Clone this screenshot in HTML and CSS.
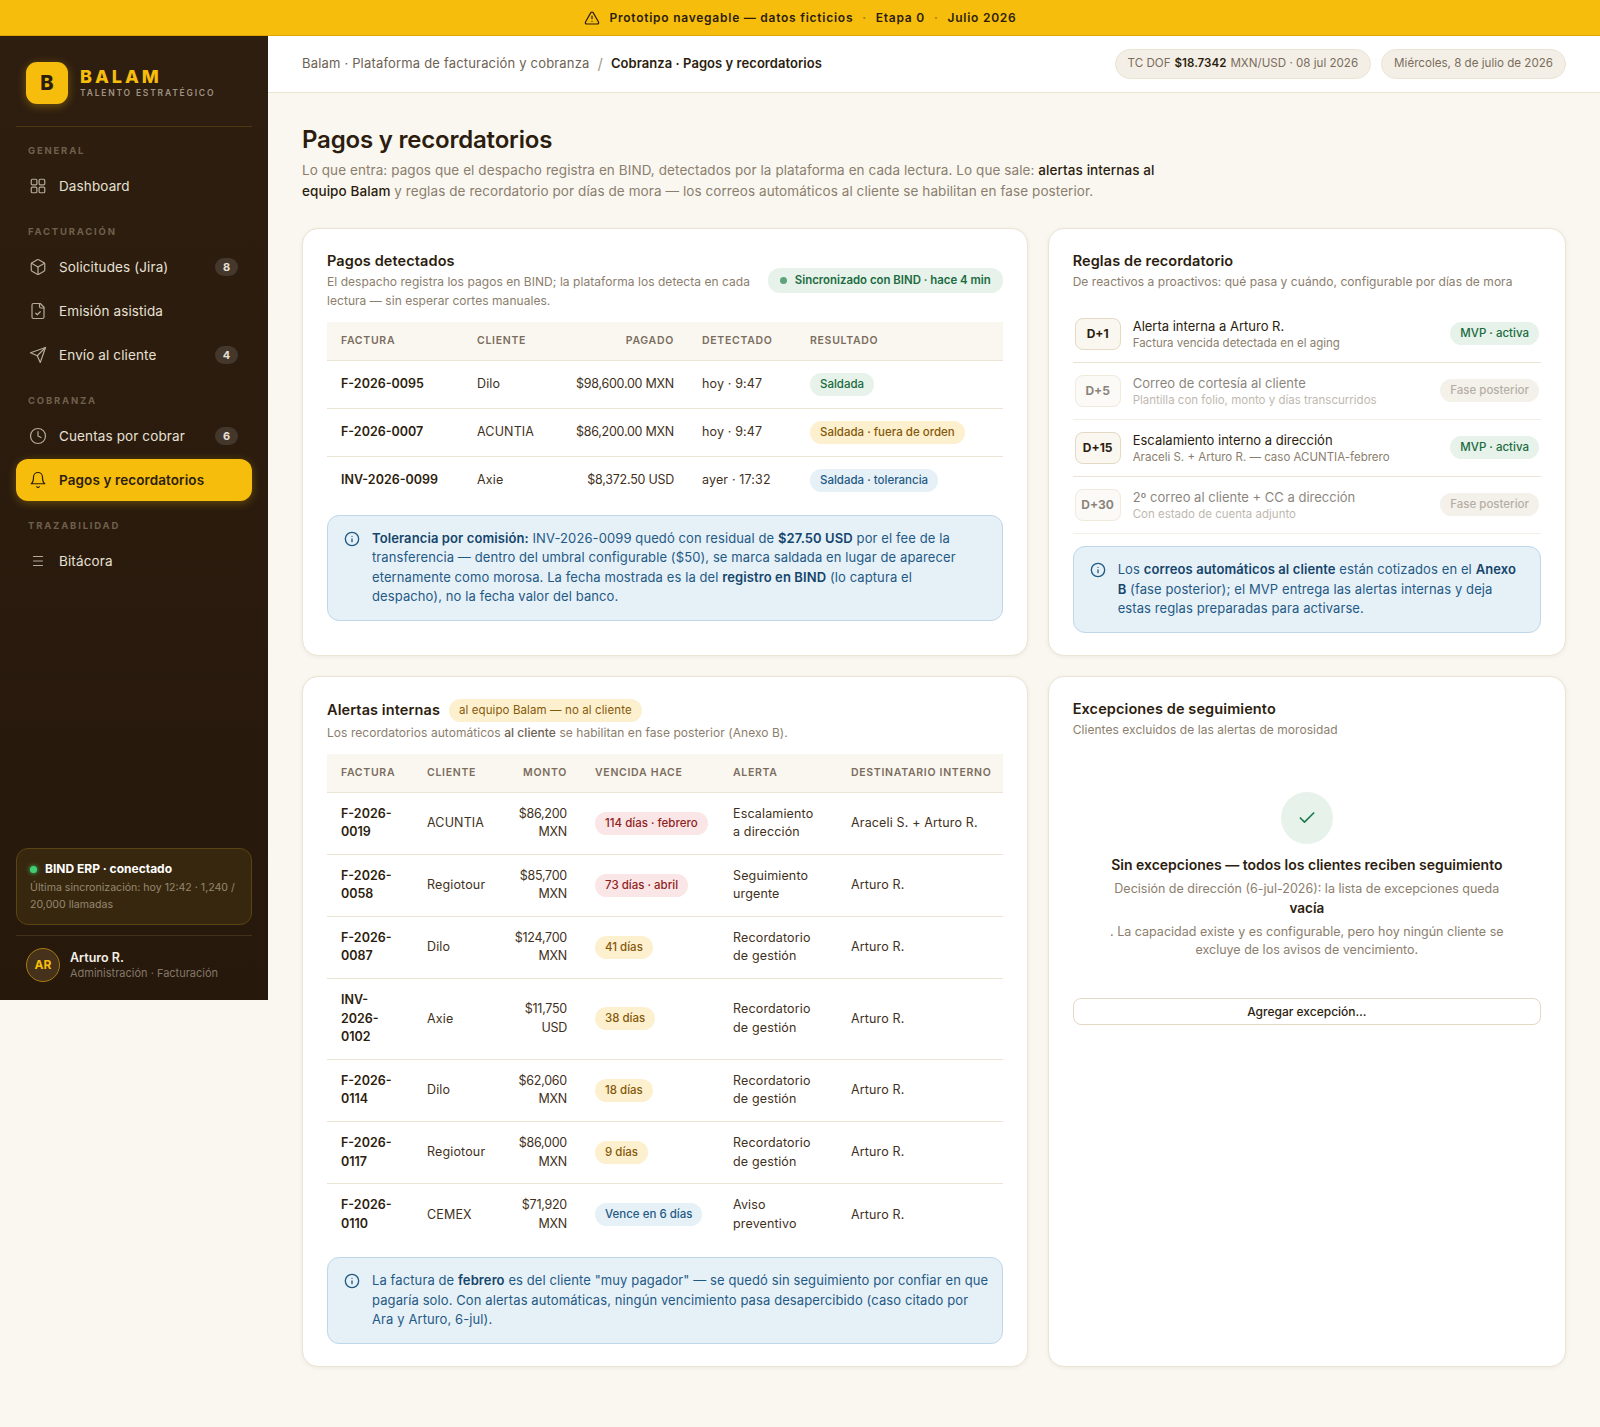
FILE: index.html
```html
<!DOCTYPE html>
<html lang="es">
<head>
    <meta charset="UTF-8">
    <meta name="viewport" content="width=device-width, initial-scale=1.0">
    <title>Pagos y recordatorios · Balam</title>
    <link rel="stylesheet" href="styles.css">
</head>
<body>
    <div class="proto-bar">
        <svg class="proto-icon" viewBox="0 0 24 24"><path d="m21.73 18-8-14a2 2 0 0 0-3.48 0l-8 14A2 2 0 0 0 4 21h16a2 2 0 0 0 1.73-3"/><path d="M12 9v4"/><path d="M12 17h.01"/></svg>
        <span>Prototipo navegable — datos ficticios</span>
        <span class="proto-sep">·</span>
        <span>Etapa 0</span>
        <span class="proto-sep">·</span>
        <span>Julio 2026</span>
    </div>

    <div class="shell">
        <aside class="sidebar">
            <div class="brand">
                <div class="brand-mark">B</div>
                <div>
                    <div class="brand-name">BALAM</div>
                    <div class="brand-sub">TALENTO ESTRATÉGICO</div>
                </div>
            </div>

            <nav class="nav">
                <div class="nav-label">General</div>
                <a class="nav-item">
                    <svg class="nav-icon" viewBox="0 0 24 24"><rect x="3" y="3" width="7.5" height="7.5" rx="1.5"/><rect x="13.5" y="3" width="7.5" height="7.5" rx="1.5"/><rect x="13.5" y="13.5" width="7.5" height="7.5" rx="1.5"/><rect x="3" y="13.5" width="7.5" height="7.5" rx="1.5"/></svg>
                    Dashboard
                </a>

                <div class="nav-label">Facturación</div>
                <a class="nav-item">
                    <svg class="nav-icon" viewBox="0 0 24 24"><path d="M21 8a2 2 0 0 0-1-1.73l-7-4a2 2 0 0 0-2 0l-7 4A2 2 0 0 0 3 8v8a2 2 0 0 0 1 1.73l7 4a2 2 0 0 0 2 0l7-4A2 2 0 0 0 21 16Z"/><path d="m3.3 7 8.7 5 8.7-5"/><path d="M12 22V12"/></svg>
                    Solicitudes (Jira)
                    <span class="nav-count">8</span>
                </a>
                <a class="nav-item">
                    <svg class="nav-icon" viewBox="0 0 24 24"><path d="M15 2H6a2 2 0 0 0-2 2v16a2 2 0 0 0 2 2h12a2 2 0 0 0 2-2V7Z"/><path d="M14 2v4a2 2 0 0 0 2 2h4"/><path d="m9 15 2 2 4-4"/></svg>
                    Emisión asistida
                </a>
                <a class="nav-item">
                    <svg class="nav-icon" viewBox="0 0 24 24"><path d="M22 2 15 22 11 13 2 9Z"/><path d="M22 2 11 13"/></svg>
                    Envío al cliente
                    <span class="nav-count">4</span>
                </a>

                <div class="nav-label">Cobranza</div>
                <a class="nav-item">
                    <svg class="nav-icon" viewBox="0 0 24 24"><circle cx="12" cy="12" r="10"/><polyline points="12 6 12 12 16 14"/></svg>
                    Cuentas por cobrar
                    <span class="nav-count">6</span>
                </a>
                <a class="nav-item active">
                    <svg class="nav-icon" viewBox="0 0 24 24"><path d="M6 8a6 6 0 0 1 12 0c0 7 3 9 3 9H3s3-2 3-9"/><path d="M10.3 21a1.94 1.94 0 0 0 3.4 0"/></svg>
                    Pagos y recordatorios
                </a>

                <div class="nav-label">Trazabilidad</div>
                <a class="nav-item">
                    <svg class="nav-icon" viewBox="0 0 24 24"><path d="M6 6h12"/><path d="M6 12h12"/><path d="M6 18h12"/></svg>
                    Bitácora
                </a>
            </nav>

            <div class="sync-box">
                <div class="sync-title"><span class="sync-dot"></span>BIND ERP · conectado</div>
                <div class="sync-text">Última sincronización: hoy 12:42 · 1,240 / 20,000 llamadas</div>
            </div>

            <div class="user">
                <div class="avatar">AR</div>
                <div>
                    <div class="user-name">Arturo R.</div>
                    <div class="user-role">Administración · Facturación</div>
                </div>
            </div>
        </aside>

        <div class="content">
            <header class="topbar">
                <div class="crumbs">
                    <span class="crumb-root">Balam · Plataforma de facturación y cobranza</span>
                    <span class="crumb-sep">/</span>
                    <strong>Cobranza · Pagos y recordatorios</strong>
                </div>
                <div class="top-pills">
                    <div class="top-pill">TC DOF <strong>$18.7342</strong> MXN/USD · 08 jul 2026</div>
                    <div class="top-pill">Miércoles, 8 de julio de 2026</div>
                </div>
            </header>

            <main class="page">
                <h1>Pagos y recordatorios</h1>
                <p class="lead">Lo que entra: pagos que el despacho registra en BIND, detectados por la plataforma en cada lectura. Lo que sale: <strong>alertas internas al equipo Balam</strong> y reglas de recordatorio por días de mora — los correos automáticos al cliente se habilitan en fase posterior.</p>

                <div class="grid">
                    <section class="card">
                        <div class="card-head">
                            <div class="card-head-text">
                                <h2>Pagos detectados</h2>
                                <p class="card-sub">El despacho registra los pagos en BIND; la plataforma los detecta en cada lectura — sin esperar cortes manuales.</p>
                            </div>
                            <span class="pill green sync-pill"><span class="pill-dot"></span>Sincronizado con BIND · hace 4 min</span>
                        </div>

                        <table class="data pagos">
                            <thead>
                                <tr>
                                    <th>Factura</th>
                                    <th>Cliente</th>
                                    <th class="num">Pagado</th>
                                    <th>Detectado</th>
                                    <th>Resultado</th>
                                </tr>
                            </thead>
                            <tbody>
                                <tr>
                                    <td class="folio">F-2026-0095</td>
                                    <td>Dilo</td>
                                    <td class="num">$98,600.00 MXN</td>
                                    <td>hoy · 9:47</td>
                                    <td><span class="pill green">Saldada</span></td>
                                </tr>
                                <tr>
                                    <td class="folio">F-2026-0007</td>
                                    <td>ACUNTIA</td>
                                    <td class="num">$86,200.00 MXN</td>
                                    <td>hoy · 9:47</td>
                                    <td><span class="pill amber">Saldada · fuera de orden</span></td>
                                </tr>
                                <tr>
                                    <td class="folio">INV-2026-0099</td>
                                    <td>Axie</td>
                                    <td class="num">$8,372.50 USD</td>
                                    <td>ayer · 17:32</td>
                                    <td><span class="pill blue">Saldada · tolerancia</span></td>
                                </tr>
                            </tbody>
                        </table>

                        <div class="callout">
                            <svg class="callout-icon" viewBox="0 0 24 24"><circle cx="12" cy="12" r="10"/><path d="M12 16v-4"/><path d="M12 8h.01"/></svg>
                            <div><strong>Tolerancia por comisión:</strong> INV-2026-0099 quedó con residual de <strong>$27.50 USD</strong> por el fee de la transferencia — dentro del umbral configurable ($50), se marca saldada en lugar de aparecer eternamente como morosa. La fecha mostrada es la del <strong>registro en BIND</strong> (lo captura el<br>despacho), no la fecha valor del banco.</div>
                        </div>
                    </section>

                    <section class="card">
                        <div class="card-head">
                            <div class="card-head-text">
                                <h2>Reglas de recordatorio</h2>
                                <p class="card-sub">De reactivos a proactivos: qué pasa y cuándo, configurable por días de mora</p>
                            </div>
                        </div>

                        <div class="rules">
                            <div class="rule">
                                <div class="rule-day">D+1</div>
                                <div class="rule-body">
                                    <div class="rule-title">Alerta interna a Arturo R.</div>
                                    <div class="rule-sub">Factura vencida detectada en el aging</div>
                                </div>
                                <span class="pill green">MVP · activa</span>
                            </div>
                            <div class="rule later">
                                <div class="rule-day">D+5</div>
                                <div class="rule-body">
                                    <div class="rule-title">Correo de cortesía al cliente</div>
                                    <div class="rule-sub">Plantilla con folio, monto y días transcurridos</div>
                                </div>
                                <span class="pill grey">Fase posterior</span>
                            </div>
                            <div class="rule">
                                <div class="rule-day">D+15</div>
                                <div class="rule-body">
                                    <div class="rule-title">Escalamiento interno a dirección</div>
                                    <div class="rule-sub">Araceli S. + Arturo R. — caso ACUNTIA-febrero</div>
                                </div>
                                <span class="pill green">MVP · activa</span>
                            </div>
                            <div class="rule later">
                                <div class="rule-day">D+30</div>
                                <div class="rule-body">
                                    <div class="rule-title">2º correo al cliente + CC a dirección</div>
                                    <div class="rule-sub">Con estado de cuenta adjunto</div>
                                </div>
                                <span class="pill grey">Fase posterior</span>
                            </div>
                        </div>

                        <div class="callout">
                            <svg class="callout-icon" viewBox="0 0 24 24"><circle cx="12" cy="12" r="10"/><path d="M12 16v-4"/><path d="M12 8h.01"/></svg>
                            <div>Los <strong>correos automáticos al cliente</strong> están cotizados en el <strong>Anexo<br>B</strong> (fase posterior); el MVP entrega las alertas internas y deja estas reglas preparadas para activarse.</div>
                        </div>
                    </section>

                    <section class="card">
                        <div class="card-head">
                            <div class="card-head-text">
                                <h2>Alertas internas <span class="pill amber head-pill">al equipo Balam — no al cliente</span></h2>
                                <p class="card-sub">Los recordatorios automáticos <strong>al cliente</strong> se habilitan en fase posterior (Anexo B).</p>
                            </div>
                        </div>

                        <table class="data alertas">
                            <thead>
                                <tr>
                                    <th>Factura</th>
                                    <th>Cliente</th>
                                    <th class="num">Monto</th>
                                    <th>Vencida hace</th>
                                    <th>Alerta</th>
                                    <th>Destinatario interno</th>
                                </tr>
                            </thead>
                            <tbody>
                                <tr>
                                    <td class="folio">F-2026-0019</td>
                                    <td>ACUNTIA</td>
                                    <td class="num">$86,200 MXN</td>
                                    <td><span class="pill red">114 días · febrero</span></td>
                                    <td>Escalamiento a dirección</td>
                                    <td>Araceli S. + Arturo R.</td>
                                </tr>
                                <tr>
                                    <td class="folio">F-2026-0058</td>
                                    <td>Regiotour</td>
                                    <td class="num">$85,700 MXN</td>
                                    <td><span class="pill red">73 días · abril</span></td>
                                    <td>Seguimiento urgente</td>
                                    <td>Arturo R.</td>
                                </tr>
                                <tr>
                                    <td class="folio">F-2026-0087</td>
                                    <td>Dilo</td>
                                    <td class="num">$124,700 MXN</td>
                                    <td><span class="pill amber">41 días</span></td>
                                    <td>Recordatorio de gestión</td>
                                    <td>Arturo R.</td>
                                </tr>
                                <tr>
                                    <td class="folio">INV-2026-0102</td>
                                    <td>Axie</td>
                                    <td class="num">$11,750 USD</td>
                                    <td><span class="pill amber">38 días</span></td>
                                    <td>Recordatorio de gestión</td>
                                    <td>Arturo R.</td>
                                </tr>
                                <tr>
                                    <td class="folio">F-2026-0114</td>
                                    <td>Dilo</td>
                                    <td class="num">$62,060 MXN</td>
                                    <td><span class="pill amber">18 días</span></td>
                                    <td>Recordatorio de gestión</td>
                                    <td>Arturo R.</td>
                                </tr>
                                <tr>
                                    <td class="folio">F-2026-0117</td>
                                    <td>Regiotour</td>
                                    <td class="num">$86,000 MXN</td>
                                    <td><span class="pill amber">9 días</span></td>
                                    <td>Recordatorio de gestión</td>
                                    <td>Arturo R.</td>
                                </tr>
                                <tr>
                                    <td class="folio">F-2026-0110</td>
                                    <td>CEMEX</td>
                                    <td class="num">$71,920 MXN</td>
                                    <td><span class="pill blue">Vence en 6 días</span></td>
                                    <td>Aviso preventivo</td>
                                    <td>Arturo R.</td>
                                </tr>
                            </tbody>
                        </table>

                        <div class="callout">
                            <svg class="callout-icon" viewBox="0 0 24 24"><circle cx="12" cy="12" r="10"/><path d="M12 16v-4"/><path d="M12 8h.01"/></svg>
                            <div>La factura de <strong>febrero</strong> es del cliente "muy pagador" — se quedó sin seguimiento por confiar en que pagaría solo. Con alertas automáticas, ningún vencimiento pasa desapercibido (caso citado por<br>Ara y Arturo, 6-jul).</div>
                        </div>
                    </section>

                    <section class="card">
                        <div class="card-head">
                            <div class="card-head-text">
                                <h2>Excepciones de seguimiento</h2>
                                <p class="card-sub">Clientes excluidos de las alertas de morosidad</p>
                            </div>
                        </div>

                        <div class="empty">
                            <div class="empty-check">
                                <svg viewBox="0 0 24 24"><path d="M20 6 9 17l-5-5"/></svg>
                            </div>
                            <div class="empty-title">Sin excepciones — todos los clientes reciben seguimiento</div>
                            <p class="empty-text">Decisión de dirección (6-jul-2026): la lista de excepciones queda <strong>vacía</strong>. La capacidad existe y es configurable, pero hoy ningún cliente se excluye de los avisos de vencimiento.</p>
                        </div>

                        <button class="btn">Agregar excepción…</button>
                    </section>
                </div>
            </main>
        </div>
    </div>
</body>
</html>
```

FILE: styles.css
```css
:root {
    --amber: #f6bd0c;
    --ink: #2c1d0e;
    --muted: #8b7e6d;
    --line: #ebe3d3;
    --paper: #faf7f1;
}

* {
    box-sizing: border-box;
}

body {
    margin: 0;
    font-family: 'Inter', 'Noto Sans', sans-serif;
    font-size: 13px;
    line-height: 1.5;
    color: var(--ink);
    background-color: var(--paper);
}

svg {
    fill: none;
    stroke: currentColor;
    stroke-width: 2;
    stroke-linecap: round;
    stroke-linejoin: round;
}

strong {
    font-weight: 600;
}

/* franja superior */
.proto-bar {
    height: 36px;
    display: flex;
    align-items: center;
    justify-content: center;
    gap: 9px;
    background-color: var(--amber);
    border-bottom: 1px solid #dca608;
    font-size: 12px;
    font-weight: 600;
    letter-spacing: 0.75px;
}

.proto-icon {
    width: 16px;
    height: 16px;
    margin-right: 1px;
    stroke-width: 1.8;
}

.proto-sep {
    opacity: 0.4;
}

.shell {
    display: flex;
    align-items: flex-start;
}

/* sidebar */
.sidebar {
    width: 268px;
    height: 964px;
    flex-shrink: 0;
    display: flex;
    flex-direction: column;
    padding: 0 16px;
    background: linear-gradient(180deg, #2e1e10 0%, #26180b 100%);
}

.brand {
    display: flex;
    align-items: center;
    gap: 12px;
    padding: 26px 10px 22px;
    border-bottom: 1px solid #4b3710;
}

.brand-mark {
    width: 42px;
    height: 42px;
    display: flex;
    align-items: center;
    justify-content: center;
    border-radius: 11px;
    background-color: var(--amber);
    box-shadow: 0 2px 10px rgba(246, 189, 12, 0.35);
    font-size: 20px;
    font-weight: 800;
}

.brand-name {
    font-size: 18px;
    font-weight: 800;
    line-height: 19px;
    letter-spacing: 3px;
    color: var(--amber);
}

.brand-sub {
    margin-top: 1px;
    font-size: 8.5px;
    font-weight: 600;
    line-height: 13px;
    letter-spacing: 1.8px;
    color: #a09383;
}

.nav {
    margin-top: 1px;
}

.nav-label {
    padding: 16px 12px 8px;
    font-size: 9.5px;
    font-weight: 700;
    line-height: 13px;
    letter-spacing: 1.8px;
    text-transform: uppercase;
    color: #6f604c;
}

.nav-item {
    height: 42px;
    margin-bottom: 2px;
    display: flex;
    align-items: center;
    gap: 12px;
    padding: 0 14px 0 13px;
    border-radius: 12px;
    font-size: 13.5px;
    letter-spacing: 0.12px;
    color: #e7e0d4;
}

.nav-item.active {
    background-color: var(--amber);
    color: var(--ink);
    font-weight: 600;
    letter-spacing: 0.1px;
    box-shadow: 0 2px 10px rgba(246, 189, 12, 0.3);
}

.nav-icon {
    width: 18px;
    height: 18px;
    stroke-width: 1.6;
    flex-shrink: 0;
    color: #b5aa9b;
}

.active .nav-icon {
    color: var(--ink);
}

.nav-count {
    margin-left: auto;
    min-width: 23px;
    padding: 1px 0;
    border-radius: 10px;
    background-color: rgba(255, 255, 255, 0.12);
    font-size: 11px;
    font-weight: 700;
    letter-spacing: 0;
    text-align: center;
}

.sync-box {
    margin-top: auto;
    padding: 11px 13px;
    border: 1px solid #5b4312;
    border-radius: 12px;
    background-color: #38270f;
}

.sync-title {
    display: flex;
    align-items: center;
    gap: 8px;
    font-size: 12px;
    font-weight: 700;
    line-height: 18px;
    color: #fff;
}

.sync-dot {
    width: 7px;
    height: 7px;
    border-radius: 50%;
    background-color: #3ecf73;
    box-shadow: 0 0 4px #3ecf73;
}

.sync-text {
    margin-top: 1px;
    font-size: 10.6px;
    line-height: 17px;
    color: #94876f;
}

.user {
    display: flex;
    align-items: center;
    gap: 10px;
    margin-top: 10px;
    padding: 12px 10px 18px;
    border-top: 1px solid #423018;
}

.avatar {
    width: 34px;
    height: 34px;
    display: flex;
    align-items: center;
    justify-content: center;
    border: 1px solid #a67a12;
    border-radius: 50%;
    background-color: #46321a;
    color: var(--amber);
    font-size: 12px;
    font-weight: 700;
}

.user-name {
    font-size: 12.5px;
    font-weight: 600;
    line-height: 17px;
    color: #f4efe6;
}

.user-role {
    font-size: 11px;
    line-height: 15px;
    color: #84776a;
}

/* contenido */
.content {
    flex: 1;
    min-width: 0;
}

.topbar {
    height: 57px;
    display: flex;
    align-items: center;
    justify-content: space-between;
    padding: 0 34px;
    background-color: #fff;
    border-bottom: 1px solid var(--line);
}

.crumbs {
    display: flex;
    align-items: center;
    gap: 8px;
    color: #6e6153;
}

.crumb-root {
    letter-spacing: 0.18px;
}

.crumbs strong {
    letter-spacing: 0.05px;
    color: var(--ink);
}

.crumb-sep {
    color: #a49a8b;
    font-size: 15px;
}

.top-pills {
    display: flex;
    gap: 10px;
}

.top-pill {
    height: 30px;
    display: flex;
    align-items: center;
    gap: 4px;
    padding: 0 12px;
    border: 1px solid var(--line);
    border-radius: 15px;
    background-color: #f4efe6;
    color: #7a6d5d;
    font-size: 11.6px;
}

.top-pill strong {
    color: var(--ink);
}

.page {
    padding: 30px 34px 34px;
}

h1 {
    margin: 0 0 3px;
    font-size: 24px;
    font-weight: 600;
    line-height: 34px;
    letter-spacing: -0.2px;
}

.lead {
    max-width: 860px;
    margin: 0 0 27px;
    font-size: 13.5px;
    line-height: 20.5px;
    letter-spacing: 0.08px;
    color: var(--muted);
}

.lead strong {
    font-weight: 500;
    color: var(--ink);
}

.grid {
    display: grid;
    grid-template-columns: 1.4fr 1fr;
    gap: 20px;
}

.card {
    padding: 22px 24px;
    border: 1px solid var(--line);
    border-radius: 16px;
    background-color: #fff;
    box-shadow: 0 1px 4px rgba(70, 50, 20, 0.07);
}

.card-head {
    display: flex;
    align-items: center;
    justify-content: space-between;
    gap: 16px;
    margin-bottom: 12px;
}

.card-head-text {
    min-width: 0;
}

h2 {
    margin: 0 0 2px;
    display: flex;
    align-items: center;
    gap: 9px;
    font-size: 14.5px;
    font-weight: 600;
    line-height: 20px;
    letter-spacing: 0.1px;
}

.card-sub {
    margin: 0;
    font-size: 12px;
    line-height: 18.5px;
    letter-spacing: 0.05px;
    color: var(--muted);
}

.card-sub strong {
    font-weight: 500;
    color: #6e6153;
}

/* pills */
.pill {
    display: inline-block;
    padding: 3px 10px;
    border-radius: 12px;
    font-size: 11.5px;
    font-weight: 500;
    line-height: 17px;
    white-space: nowrap;
}

.green {
    background-color: #e6f2ea;
    color: #1b6b40;
}

.amber {
    background-color: #fdf0cf;
    color: #85590a;
}

.blue {
    background-color: #e6f0f7;
    color: #1f5a85;
}

.red {
    background-color: #fae6e6;
    color: #8f1f1f;
}

.grey {
    background-color: #ebe6da;
    color: #7a6d5d;
}

.sync-pill {
    flex-shrink: 0;
    display: flex;
    align-items: center;
    gap: 8px;
    padding: 4px 12px;
    font-size: 11.4px;
    font-weight: 600;
}

.pill-dot {
    width: 7px;
    height: 7px;
    border-radius: 50%;
    background-color: #5da37b;
}

.head-pill {
    font-weight: 400;
    letter-spacing: 0.1px;
}

/* tablas */
.data {
    width: 100%;
    table-layout: fixed;
    border-collapse: collapse;
    font-size: 12.5px;
}

.data th {
    height: 38px;
    padding: 0 14px;
    background-color: var(--paper);
    border-bottom: 1px solid var(--line);
    font-size: 10.5px;
    font-weight: 600;
    letter-spacing: 0.7px;
    text-align: left;
    text-transform: uppercase;
    color: #7a6d5d;
}

.data td {
    padding: 12px 14px;
    border-bottom: 1px solid var(--line);
    vertical-align: middle;
    line-height: 18.6px;
    letter-spacing: 0.15px;
    color: #3f3122;
}

.data tbody tr:last-child td {
    border-bottom: none;
}

.data .num {
    text-align: right;
}

.data td.num {
    letter-spacing: -0.25px;
}

.data .pill {
    letter-spacing: 0;
}

.data td.folio {
    font-weight: 600;
    letter-spacing: 0;
    color: var(--ink);
}

.pagos td.num {
    white-space: nowrap;
}

.pagos th:nth-child(1) { width: 136px; }
.pagos th:nth-child(2) { width: 97px; }
.pagos th:nth-child(3) { width: 128px; }
.pagos th:nth-child(4) { width: 108px; }

.alertas th:nth-child(1) { width: 86px; }
.alertas th:nth-child(2) { width: 81px; }
.alertas th:nth-child(3) { width: 87px; }
.alertas th:nth-child(4) { width: 138px; }
.alertas th:nth-child(5) { width: 118px; }

.alertas th:nth-child(6) {
    padding-right: 0;
    white-space: nowrap;
}

/* reglas */
.rules {
    margin-top: 14px;
    margin-bottom: 12.5px;
}

.rule {
    height: 57px;
    display: flex;
    align-items: center;
    gap: 12px;
    padding: 0 2px;
    border-bottom: 1px solid var(--line);
}

.rule.later {
    opacity: 0.55;
}

.rule-day {
    width: 46px;
    height: 32px;
    flex-shrink: 0;
    display: flex;
    align-items: center;
    justify-content: center;
    border: 1px solid #e4d9c3;
    border-radius: 8px;
    background-color: var(--paper);
    font-size: 12px;
    font-weight: 700;
}

.rule-body {
    flex: 1;
    min-width: 0;
}

.rule-title {
    font-size: 13px;
    line-height: 18px;
}

.rule-sub {
    font-size: 11.5px;
    line-height: 16px;
    color: var(--muted);
}

/* avisos */
.callout {
    display: flex;
    gap: 12px;
    margin-top: 12px;
    padding: 13px 13px 13px 16px;
    border: 1px solid #bfd7ea;
    border-radius: 12px;
    background-color: #e6f0f7;
    color: #1f5a85;
    line-height: 19.5px;
    letter-spacing: 0.1px;
}

.pagos + .callout {
    margin-top: 11px;
}

.callout strong {
    color: #14456b;
}

.callout-icon {
    width: 16px;
    height: 16px;
    flex-shrink: 0;
    margin-top: 2px;
}

/* excepciones */
.empty {
    display: flex;
    flex-direction: column;
    align-items: center;
    padding: 41px 0 39px;
    text-align: center;
}

.empty-check {
    width: 52px;
    height: 52px;
    display: flex;
    align-items: center;
    justify-content: center;
    margin-bottom: 11px;
    border-radius: 50%;
    background-color: #e6f2ea;
    color: #1f7a4a;
}

.empty-check svg {
    width: 20px;
    height: 20px;
}

.empty-title {
    margin-bottom: 5px;
    font-size: 14px;
    font-weight: 600;
    line-height: 20px;
}

.empty-text {
    max-width: 400px;
    margin: 0;
    display: flex;
    flex-direction: column;
    font-size: 12.5px;
    line-height: 18px;
    color: var(--muted);
}

.empty-text strong {
    margin-bottom: 5px;
    font-size: 13.5px;
    line-height: 20px;
    color: var(--ink);
}

.btn {
    width: 100%;
    height: 27px;
    border: 1px solid #e2d8c3;
    border-radius: 8px;
    background-color: #fff;
    color: var(--ink);
    font-family: inherit;
    font-size: 12px;
    font-weight: 500;
    cursor: pointer;
}
```
